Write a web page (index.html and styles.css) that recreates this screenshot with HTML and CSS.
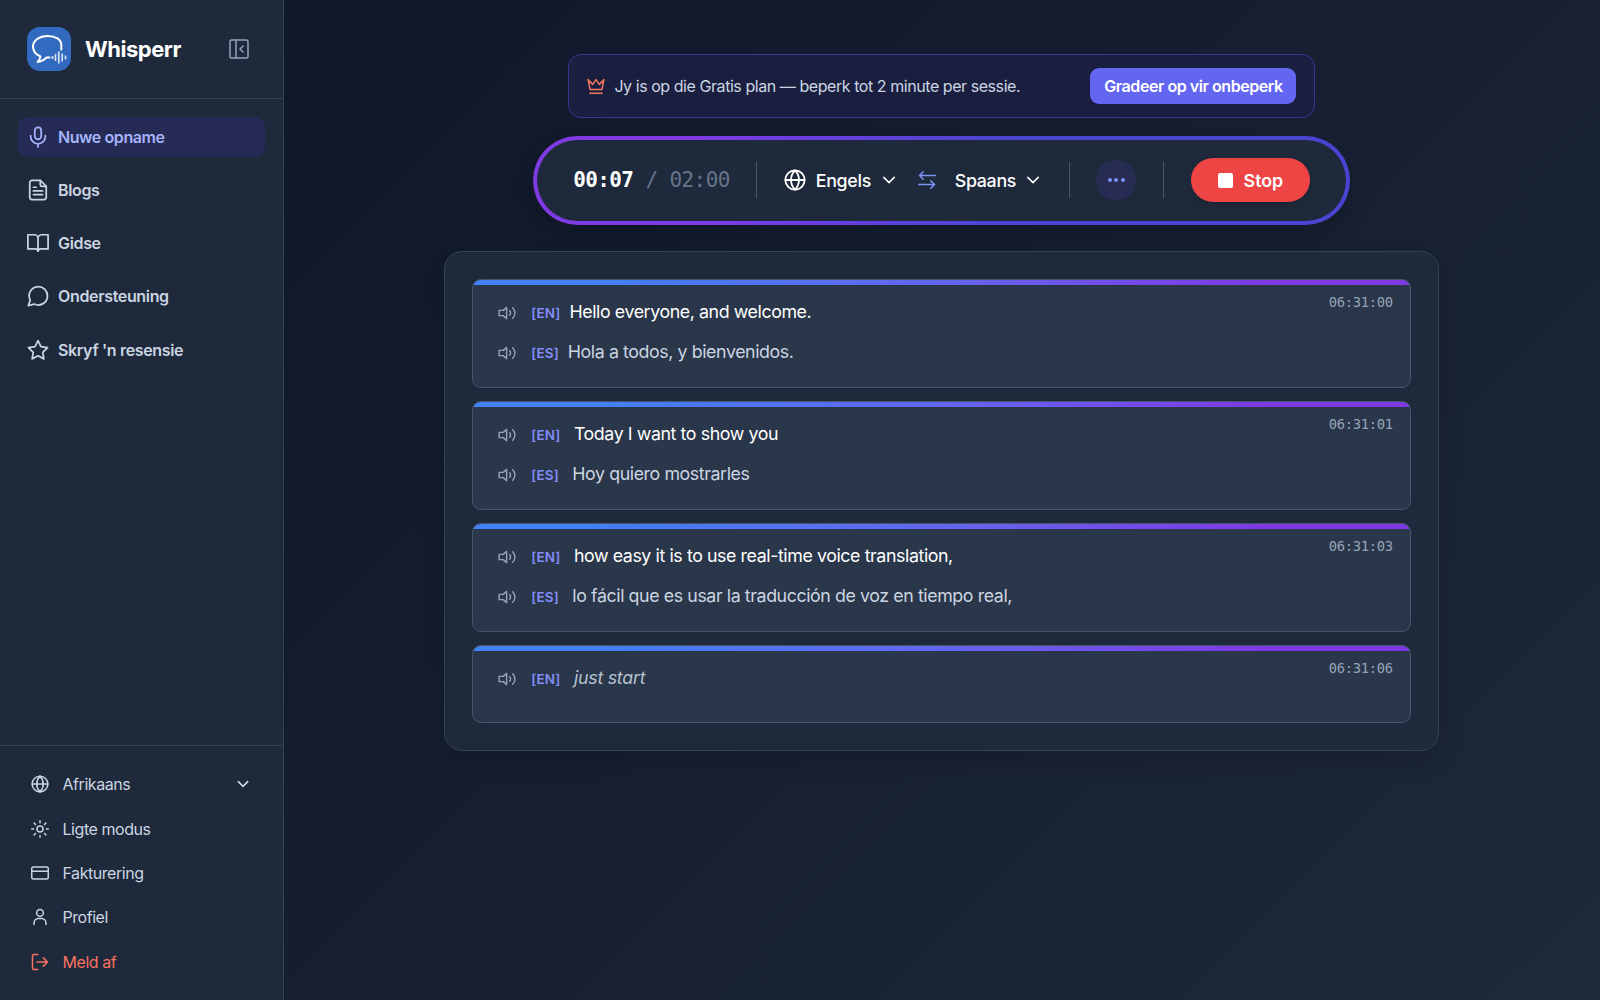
FILE: index.html
```
<!DOCTYPE html>
<html lang="af">
<head>
    <meta charset="UTF-8">
    <meta name="viewport" content="width=device-width, initial-scale=1.0">
    <title>Whisperr</title>
    <link rel="stylesheet" href="styles.css">
</head>
<body>

    <!-- Shared icons -->
    <svg class="sprite">
        <symbol id="globe" viewBox="0 0 24 24"><circle cx="12" cy="12" r="10.500"/><path d="M1.500 12h21M12 1.500c-5.800 6-5.800 15 0 21M12 1.500c5.800 6 5.800 15 0 21"/></symbol>
        <symbol id="chevron" viewBox="0 0 24 24"><path d="M5 8.500l7 7 7-7"/></symbol>
        <symbol id="speaker" viewBox="0 0 24 24"><path d="M11.500 4.500L7 8.500H1.500v7H7l4.500 4v-15z"/><path d="M15.500 9a4.200 4.200 0 0 1 0 6M19.500 5a9.500 9.500 0 0 1 0 14"/></symbol>
    </svg>

    <aside class="sidebar">
        <div class="brand">
            <svg class="logo" viewBox="0 0 44 44">
                <path d="M34.300 22.500V18C34.300 12.500 28.500 9 20.500 9S6 13.500 6 19.500c0 4.500 2.800 8 7.500 10-.5 2.500-1.500 4.300-3 5.500 3.500-.3 6.500-2 9-4.500h3" fill="none" stroke="#fff" stroke-width="2" stroke-linejoin="round" stroke-linecap="round"/>
                <path d="M25.500 29v3M28.500 27v7M31.800 24.500v12M35.200 26.500v8M38.500 28.500v4" stroke="#d6e2f5" stroke-width="1.700"/>
            </svg>
            <span class="brand-name">Whisperr</span>
            <svg class="icon collapse" viewBox="0 0 24 24"><rect x="3" y="3" width="18" height="18" rx="1.500"/><path d="M9 3v18M16 9l-3 3 3 3"/></svg>
        </div>

        <nav class="nav">
            <a class="nav-item active"><svg class="icon" viewBox="0 0 24 24"><rect x="8.500" y="1.500" width="7" height="13" rx="3.500"/><path d="M4 10.500v1a8 8 0 0 0 16 0v-1M12 19.500V23"/></svg>Nuwe opname</a>
            <a class="nav-item"><svg class="icon" viewBox="0 0 24 24"><path d="M14.500 1.500H5.500A2.500 2.500 0 0 0 3 4v16a2.500 2.500 0 0 0 2.500 2.500h13A2.500 2.500 0 0 0 21 20V8z"/><path d="M14.500 1.500V6a2 2 0 0 0 2 2H21M7 9h3M7 13h10M7 17h10"/></svg>Blogs</a>
            <a class="nav-item"><svg class="icon" viewBox="0 0 24 24"><path d="M1 3h7a4 4 0 0 1 4 4v14a3 3 0 0 0-3-2.500H1zM23 3h-7a4 4 0 0 0-4 4v14a3 3 0 0 1 3-2.500h8z"/></svg>Gidse</a>
            <a class="nav-item"><svg class="icon" viewBox="0 0 24 24"><path d="M1.500 22.500l2-6A10 10 0 1 1 8 20.800z"/></svg>Ondersteuning</a>
            <a class="nav-item"><svg class="icon" viewBox="0 0 24 24"><path d="M12 1.800l3.200 6.600 7.200 1-5.200 5.100 1.200 7.200L12 18.300l-6.400 3.400 1.200-7.200L1.600 9.400l7.200-1z"/></svg>Skryf 'n resensie</a>
        </nav>

        <div class="settings">
            <a class="settings-item"><svg class="icon"><use href="#globe"/></svg>Afrikaans<svg class="icon arrow"><use href="#chevron"/></svg></a>
            <a class="settings-item"><svg class="icon" viewBox="0 0 24 24"><circle cx="12" cy="12" r="4"/><path d="M12 1v2.500M12 20.500V23M1 12h2.500M20.500 12H23M4.200 4.200L6 6M18 18l1.800 1.800M4.200 19.800L6 18M18 6l1.800-1.800"/></svg>Ligte modus</a>
            <a class="settings-item"><svg class="icon" viewBox="0 0 24 24"><rect x="1" y="4" width="22" height="16" rx="2"/><path d="M1 9.500h22"/></svg>Fakturering</a>
            <a class="settings-item"><svg class="icon" viewBox="0 0 24 24"><circle cx="12" cy="6.500" r="4.500"/><path d="M4 22v-2a6 6 0 0 1 6-6h4a6 6 0 0 1 6 6v2"/></svg>Profiel</a>
            <a class="settings-item logout"><svg class="icon" viewBox="0 0 24 24"><path d="M9 2H4a2 2 0 0 0-2 2v16a2 2 0 0 0 2 2h5M8 12h14M16.500 6.500L22 12l-5.500 5.500"/></svg>Meld af</a>
        </div>
    </aside>

    <main class="main">
        <div class="banner">
            <svg class="icon crown" viewBox="0 0 24 24"><path d="M1.500 3.500l2.500 13h16l2.500-13-6 6.500L12 3.500 7.500 10zM4 21.500h16"/></svg>
            <span class="banner-text">Jy is op die Gratis plan — beperk tot 2 minute per sessie.</span>
            <button class="upgrade">Gradeer op vir onbeperk</button>
        </div>

        <div class="toolbar">
            <div class="timer">00:07<span class="limit"> / 02:00</span></div>
            <span class="divider"></span>
            <div class="languages">
                <svg class="icon world"><use href="#globe"/></svg>
                <span class="from">Engels</span>
                <svg class="icon arrow"><use href="#chevron"/></svg>
                <svg class="icon swap" viewBox="0 0 24 24"><path d="M23 6H2M7 1L2 6l5 5M1 18h21M17 13l5 5-5 5"/></svg>
                <span class="to">Spaans</span>
                <svg class="icon arrow"><use href="#chevron"/></svg>
            </div>
            <span class="divider"></span>
            <button class="more"><i></i><i></i><i></i></button>
            <span class="divider"></span>
            <button class="stop"><span class="square"></span>Stop</button>
        </div>

        <section class="transcript">
            <article class="entry">
                <time>06:31:00</time>
                <p class="line"><svg class="icon"><use href="#speaker"/></svg><b class="lang">[EN]</b>Hello everyone, and welcome.</p>
                <p class="line translated"><svg class="icon"><use href="#speaker"/></svg><b class="lang">[ES]</b>Hola a todos, y bienvenidos.</p>
            </article>
            <article class="entry spaced">
                <time>06:31:01</time>
                <p class="line"><svg class="icon"><use href="#speaker"/></svg><b class="lang">[EN]</b>Today I want to show you</p>
                <p class="line translated"><svg class="icon"><use href="#speaker"/></svg><b class="lang">[ES]</b>Hoy quiero mostrarles</p>
            </article>
            <article class="entry spaced">
                <time>06:31:03</time>
                <p class="line"><svg class="icon"><use href="#speaker"/></svg><b class="lang">[EN]</b>how easy it is to use real-time voice translation,</p>
                <p class="line translated"><svg class="icon"><use href="#speaker"/></svg><b class="lang">[ES]</b>lo fácil que es usar la traducción de voz en tiempo real,</p>
            </article>
            <article class="entry spaced partial">
                <time>06:31:06</time>
                <p class="line"><svg class="icon"><use href="#speaker"/></svg><b class="lang">[EN]</b>just start</p>
            </article>
        </section>
    </main>

</body>
</html>
```
FILE: styles.css
```
* {
    box-sizing: border-box;
}
body {
    margin: 0;
    display: flex;
    height: 100vh;
    overflow: hidden;
    background: #0f172a;
    color: #fff;
    font-family: Inter, sans-serif;
    font-size: 16px;
}
button {
    border: none;
    padding: 0;
    color: #fff;
    font-family: inherit;
}
.sprite {
    display: none;
}
.icon {
    flex: none;
    fill: none;
    stroke: currentColor;
    stroke-width: 2;
    stroke-linecap: round;
    stroke-linejoin: round;
}

/* Sidebar */
.sidebar {
    flex: none;
    display: flex;
    flex-direction: column;
    width: 284.4px;
    background: #1e293b;
    border-right: 1px solid #334155;
}
.brand {
    display: flex;
    align-items: center;
    height: 99px;
    padding: 0 32px 0 27px;
    border-bottom: 1px solid #334155;
}
.logo {
    width: 44px;
    height: 44px;
    border-radius: 13px;
    background: #326ac0;
}
.brand-name {
    margin-left: 14px;
    font-size: 22px;
    font-weight: 700;
    letter-spacing: -0.5px;
}
.collapse {
    width: 24px;
    height: 24px;
    margin-left: auto;
    color: #94a3b8;
    stroke-width: 1.5;
}
.nav {
    display: flex;
    flex-direction: column;
    gap: 13.3px;
    padding: 17.5px 18px;
}
.nav-item {
    display: flex;
    align-items: center;
    gap: 9px;
    height: 40px;
    padding: 0 9px;
    border-radius: 9px;
    color: #cbd5e1;
    font-weight: 600;
    letter-spacing: -0.34px;
}
.nav-item .icon {
    width: 22px;
    height: 22px;
    stroke-width: 1.9;
}
.nav-item.active {
    background: #252b54;
    color: #a5b4fc;
    letter-spacing: -0.42px;
}
.settings {
    margin-top: auto;
    padding: 16px 18px 16px;
    border-top: 1px solid #334155;
}
.settings-item {
    display: flex;
    align-items: center;
    height: 44.4px;
    padding: 0 14px 0 13px;
    gap: 13.5px;
    color: #cbd5e1;
    font-weight: 400;
    letter-spacing: -0.45px;
}
.settings-item .icon {
    width: 18px;
    height: 18px;
    stroke-width: 2;
}
.settings-item .arrow {
    width: 16px;
    height: 16px;
    margin-left: auto;
    stroke-width: 2.5;
}
.settings-item.logout {
    color: #f87161;
}

/* Main column */
.main {
    flex: 1;
    display: flex;
    flex-direction: column;
    align-items: center;
    padding-top: 53.5px;
    padding-right: 1px;
    background: linear-gradient(135deg, #0f172a, #1e293b);
}
.banner {
    display: flex;
    align-items: center;
    width: 746.6px;
    height: 64.5px;
    padding: 0 17.5px 0 18px;
    border: 1px solid #3b3494;
    border-radius: 13px;
    background: #1a1f40;
}
.crown {
    width: 18px;
    height: 18px;
    color: #f0775a;
}
.banner-text {
    margin-left: 9px;
    color: #cbd5e1;
    letter-spacing: -0.44px;
}
.upgrade {
    margin-left: auto;
    width: 206px;
    height: 36px;
    border-radius: 9px;
    background: #6366f1;
    font-size: 16px;
    font-weight: 600;
    letter-spacing: -0.44px;
}

/* Recording toolbar */
.toolbar {
    display: flex;
    align-items: center;
    width: 817px;
    height: 88.5px;
    margin-top: 18px;
    padding: 0 36px;
    border: 4px solid transparent;
    border-radius: 45px;
    background: linear-gradient(#1e293b, #1e293b) padding-box, linear-gradient(90deg, #7e3be2 20%, #4845d4 60%) border-box;
    box-shadow: 0 11px 22px rgba(0, 0, 0, 0.2);
}
.timer {
    width: 157px;
    font-family: "DejaVu Sans Mono", monospace;
    font-size: 21px;
    font-weight: 600;
    letter-spacing: -0.6px;
    line-height: 24px;
    white-space: pre;
}
.limit {
    color: #64748b;
    font-weight: 400;
}
.divider {
    width: 1px;
    height: 36px;
    margin: 0 26.5px;
    background: #475569;
}
.languages {
    display: flex;
    align-items: center;
    font-size: 17.8px;
    font-weight: 500;
    letter-spacing: -0.3px;
}
.world {
    width: 22px;
    height: 22px;
    margin-right: 10px;
}
.languages .arrow {
    width: 18px;
    height: 18px;
    margin-left: 9px;
}
.swap {
    width: 18px;
    height: 18px;
    margin: 0 19px 0 20px;
    color: #7c93f8;
}
.from {
    width: 55px;
}
.to {
    width: 60.5px;
}
.more {
    display: flex;
    align-items: center;
    justify-content: center;
    gap: 2.5px;
    width: 40px;
    height: 40px;
    border-radius: 50%;
    background: #262c54;
}
.more i {
    width: 4px;
    height: 4px;
    border-radius: 50%;
    background: #7c93f8;
}
.stop {
    display: flex;
    align-items: center;
    justify-content: center;
    gap: 11px;
    width: 120px;
    height: 44px;
    margin-left: 0.5px;
    border-radius: 22px;
    background: #ef4444;
    box-shadow: 0 4px 8px rgba(0, 0, 0, 0.1);
    font-size: 17.8px;
    font-weight: 600;
}
.square {
    width: 15px;
    height: 15px;
    border-radius: 2px;
    background: #fff;
}

/* Transcript */
.transcript {
    display: flex;
    flex-direction: column;
    gap: 13.2px;
    width: 995px;
    height: 500px;
    margin-top: 26.5px;
    padding: 27px;
    border: 1px solid #334155;
    border-radius: 18px;
    background: #1e293b;
    box-shadow: 0 11px 22px rgba(0, 0, 0, 0.15);
}
.entry {
    position: relative;
    height: 109px;
    padding: 17px 24.5px 0;
    border: 1px solid #475569;
    border-radius: 9px;
    background: linear-gradient(90deg, #4180f5 12%, #6366f1 50%, #7f39e3 85%) top / 100% 5px no-repeat, #2a3649;
}
.entry.partial {
    height: 78px;
}
.entry time {
    position: absolute;
    top: 14px;
    right: 17.5px;
    color: #94a3b8;
    font-family: "DejaVu Sans Mono", monospace;
    font-size: 13.8px;
    letter-spacing: -0.3px;
    line-height: 16px;
}
.line {
    display: flex;
    align-items: center;
    height: 28px;
    margin: 0 0 12px;
    color: #fff;
    font-size: 17.8px;
    letter-spacing: -0.41px;
}
.line .icon {
    width: 18px;
    height: 18px;
    margin-top: 3px;
    color: #94a3b8;
    stroke-width: 1.9;
}
.lang {
    margin: 3px 9px 0 15.5px;
    color: #818cf8;
    font-size: 13.5px;
    font-weight: 600;
    letter-spacing: 0.1px;
}
.spaced .lang {
    margin-right: 13.5px;
}
.translated {
    color: #cbd5e1;
}
.partial .line {
    color: #b6c2d2;
    font-style: italic;
    letter-spacing: -0.25px;
}
.partial .lang {
    font-style: normal;
    letter-spacing: 0.1px;
}
```
